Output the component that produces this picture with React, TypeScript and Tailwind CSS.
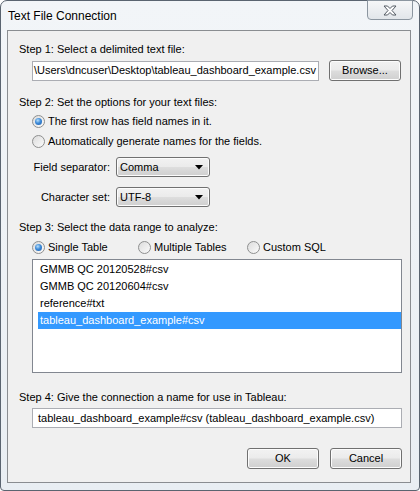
import React from "react";

const font = { fontFamily: '"Liberation Sans", Arial, sans-serif' };

function Radio({ checked, label }: { checked?: boolean; label: string }) {
  return (
    <div className="flex items-center h-[20px] whitespace-nowrap">
      <span className="relative w-[13px] h-[13px] rounded-full border border-[#8e8f8f] bg-gradient-to-br from-[#dcdcdc] to-[#fbfbfb] flex items-center justify-center">
        {checked && (
          <span className="w-[7px] h-[7px] rounded-full bg-[radial-gradient(circle_at_40%_35%,#b8e0fb_0%,#3d8ad8_45%,#1c5ba8_100%)]" />
        )}
      </span>
      <span className="ml-[3px] text-[11px] text-black">{label}</span>
    </div>
  );
}

function Button({ label, width = 72 }: { label: string; width?: number }) {
  return (
    <div
      className="h-[21px] rounded-[3px] border border-[#707070] bg-[linear-gradient(#f2f2f2_0%,#ebebeb_48%,#dddddd_52%,#cfcfcf_100%)] shadow-[inset_0_0_0_1px_#fcfcfc] flex items-center justify-center text-[11px] text-black"
      style={{ width }}
    >
      {label}
    </div>
  );
}

function Select({ value }: { value: string }) {
  return (
    <div className="w-[94px] h-[20px] rounded-[3px] border border-[#707070] bg-[linear-gradient(#f2f2f2_0%,#ebebeb_48%,#dddddd_52%,#cfcfcf_100%)] shadow-[inset_0_0_0_1px_#fcfcfc] flex items-center justify-between pl-[3px] pr-[6px]">
      <span className="text-[11px] text-black">{value}</span>
      <svg width="8" height="5" viewBox="0 0 8 5">
        <path d="M0 0 L8 0 L4 4.5 Z" fill="#000" />
      </svg>
    </div>
  );
}

export default function App() {
  const items = [
    "GMMB QC 20120528#csv",
    "GMMB QC 20120604#csv",
    "reference#txt",
    "tableau_dashboard_example#csv",
  ];
  return (
    <div className="w-[420px] h-[491px] bg-white overflow-hidden" style={font}>
      <div className="relative w-[420px] h-[491px] rounded-t-[7px] rounded-b-[4px] border border-[#5a6470] bg-[linear-gradient(#f2f5f8,#e9eef3)] flex flex-col">
        {/* title bar */}
        <div className="h-[29px] flex items-center pl-[7px]">
          <span className="text-[12px] text-black [text-shadow:0_0_8px_#ffffff,0_0_4px_#ffffff]">Text File Connection</span>
        </div>
        <div className="absolute top-[-1px] right-[6px] w-[46px] h-[20px] rounded-b-[4px] border border-[#8c96a0] bg-[linear-gradient(#f6f7f8,#e2e6ea)] flex items-center justify-center">
          <svg width="14" height="11" viewBox="0 0 14 11">
            <path
              d="M1 1 H4.5 L7 3.5 L9.5 1 H13 L9 5.5 L13 10 H9.5 L7 7.5 L4.5 10 H1 L5 5.5 Z"
              fill="#ffffff"
              stroke="#535a63"
              strokeWidth="1"
              strokeLinejoin="round"
            />
          </svg>
        </div>

        {/* client area */}
        <div className="ml-[6px] mr-[8px] mb-[7px] flex-1 border border-[#8a8d91] bg-[#f0f0f0] pl-[11px] pr-[8px] pt-[10px] text-[11px] text-black whitespace-nowrap">
          <div className="leading-[16px]">Step 1: Select a delimited text file:</div>
          <div className="ml-[13px] mt-[3px] flex items-center">
            <div className="w-[287px] h-[20px] border border-[#abadb3] bg-white overflow-hidden flex items-center pl-[1px]">
              \Users\dncuser\Desktop\tableau_dashboard_example.csv
            </div>
            <div className="ml-[10px]">
              <Button label="Browse..." />
            </div>
          </div>

          <div className="leading-[16px] mt-[13px]">Step 2: Set the options for your text files:</div>
          <div className="ml-[13px] mt-[1px]">
            <Radio checked label="The first row has field names in it." />
            <Radio label="Automatically generate names for the fields." />
          </div>
          <div className="ml-[13px] mt-[6px] flex items-center">
            <span className="w-[78px] text-right">Field separator:</span>
            <span className="ml-[6px]">
              <Select value="Comma" />
            </span>
          </div>
          <div className="ml-[13px] mt-[10px] flex items-center">
            <span className="w-[78px] text-right">Character set:</span>
            <span className="ml-[6px]">
              <Select value="UTF-8" />
            </span>
          </div>

          <div className="leading-[16px] mt-[12px]">Step 3: Select the data range to analyze:</div>
          <div className="ml-[13px] mt-[2px] flex">
            <div className="w-[106px]">
              <Radio checked label="Single Table" />
            </div>
            <div className="w-[109px]">
              <Radio label="Multiple Tables" />
            </div>
            <Radio label="Custom SQL" />
          </div>
          <div className="ml-[13px] mt-[2px] w-[370px] h-[114px] border border-[#828790] bg-white pt-[1px] pl-[5px] pr-[0px]">
            {items.map((it, i) => (
              <div
                key={it}
                className={
                  "h-[17px] flex items-center pl-[2px] text-[11px] " +
                  (i === 3 ? "bg-[#3399ff] text-white" : "text-black")
                }
              >
                {it}
              </div>
            ))}
          </div>

          <div className="leading-[16px] mt-[16px]">Step 4: Give the connection a name for use in Tableau:</div>
          <div className="ml-[13px] mt-[3px] w-[370px] h-[20px] border border-[#abadb3] bg-white flex items-center pl-[5px] overflow-hidden">
            tableau_dashboard_example#csv (tableau_dashboard_example.csv)
          </div>

          <div className="mt-[20px] flex justify-end gap-[11px]">
            <Button label="OK" />
            <Button label="Cancel" />
          </div>
        </div>
      </div>
    </div>
  );
}
